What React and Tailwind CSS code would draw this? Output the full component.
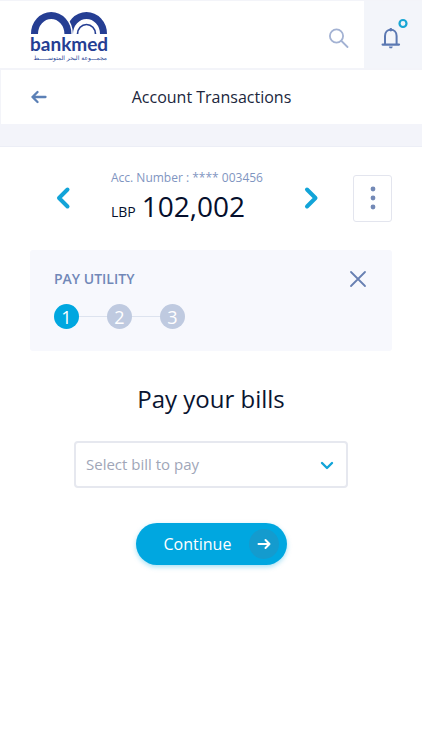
function Logo() {
  return (
    <a href="#" className="flex w-[77px] flex-col text-[#253e93]">
      <svg width="78" height="23" viewBox="0 0 78 23" fill="none" stroke="currentColor" aria-hidden="true">
        <path d="M39.500 23A17 18.500 0 0 1 73.500 23" strokeWidth="7" />
        <path d="M4.500 23A16.700 18.500 0 0 1 37.900 23" stroke="#fff" strokeWidth="10" />
        <path d="M4.500 23A16.700 18.500 0 0 1 37.900 23" strokeWidth="7" />
        <path d="M47.500 23A9 9.500 0 0 1 65.500 23" strokeWidth="1.700" />
      </svg>
      <span className="font-['Lato',sans-serif] text-[19px] leading-5 font-bold">bankmed</span>
      <span
        lang="ar"
        dir="rtl"
        className="text-right font-['DejaVu_Sans',sans-serif] text-[6px] leading-[8px] whitespace-nowrap"
      >
        مجمـــوعة البحر المتوســـــط
      </span>
    </a>
  )
}

function Chevron({ d }) {
  return (
    <svg width="16" height="24" viewBox="0 0 16 24" fill="none" stroke="currentColor" strokeWidth="4" strokeLinecap="round" strokeLinejoin="round">
      <path d={d} />
    </svg>
  )
}

function Header() {
  return (
    <header className="flex h-[70px] items-stretch border-t border-b-2 border-[#f3f4f9]">
      <div className="flex flex-1 justify-between pt-2.5 pr-[15px] pl-[30px]">
        <Logo />
        <button aria-label="Search" className="mt-[15px] h-6 text-[#a3b2d3]">
          <svg width="20" height="20" viewBox="0 0 20 20" fill="none" stroke="currentColor" strokeWidth="1.800" strokeLinecap="round">
            <circle cx="7.500" cy="8" r="6.600" />
            <path d="M12.500 13L18.500 19" />
          </svg>
        </button>
      </div>
      <button aria-label="Notifications" className="flex w-[58px] justify-center bg-[#f3f5fa] pt-4">
        <svg width="32" height="34" viewBox="0 0 32 34" fill="none" stroke="#5b78b2" strokeWidth="2">
          <path d="M8 27V19C8 15 10.500 12.800 13.800 12.800S19.600 15 19.600 19V27" />
          <path d="M5.600 27.600H22" strokeWidth="2.200" strokeLinecap="round" />
          <path d="M13.800 12.300V13" strokeWidth="2.800" strokeLinecap="round" />
          <path d="M11.800 29.600H15.800L15 31.300H12.600Z" fill="#5b78b2" stroke="none" />
          <circle cx="26" cy="6.500" r="3.500" stroke="#18a6d4" strokeWidth="2.200" />
        </svg>
      </button>
    </header>
  )
}

function TitleBar() {
  return (
    <div className="grid h-[54px] grid-cols-[60px_1fr_60px] items-center border-l border-[#f3f4f9]">
      <button aria-label="Back" className="ml-[30px] text-[#5b80b6]">
        <svg width="16" height="14" viewBox="0 0 16 14" fill="none" stroke="currentColor" strokeWidth="2.300" strokeLinecap="round" strokeLinejoin="round">
          <path d="M14.500 7H1.500M6.500 2L1.500 7L6.500 12" />
        </svg>
      </button>
      <h1 className="text-center text-base text-[#20263c]">Account Transactions</h1>
    </div>
  )
}

function AccountRow() {
  return (
    <section className="flex items-center pt-[23px]">
      <button aria-label="Previous account" className="ml-[25px] text-[#12a4d8]">
        <Chevron d="M12.500 3.500L4 12L12.500 20.500" />
      </button>
      <div className="flex flex-1 justify-center">
        <div>
          <p className="text-xs text-[#7f95c1]">Acc. Number : **** 003456</p>
          <p className="flex items-baseline gap-1.5 text-[#050f2c]">
            <span className="text-sm leading-4">LBP</span>
            <span className="text-[28px] leading-10">102,002</span>
          </p>
        </div>
      </div>
      <button aria-label="Next account" className="text-[#12a4d8]">
        <Chevron d="M4 3.500L12.500 12L4 20.500" />
      </button>
      <button
        aria-label="More options"
        className="ml-[34px] flex h-[47px] w-[39px] items-center justify-center rounded-[3px] border border-[#e3e5ee] text-[#7389b6]"
      >
        <svg width="6" height="24" viewBox="0 0 6 24" fill="currentColor">
          <circle cx="3" cy="3" r="2.400" />
          <circle cx="3" cy="12" r="2.400" />
          <circle cx="3" cy="21" r="2.400" />
        </svg>
      </button>
    </section>
  )
}

function Steps({ active }) {
  return (
    <ol className="flex items-center">
      {[1, 2, 3].map((n) => (
        <li key={n} className="flex items-center">
          {n > 1 && <span className="h-px w-7 bg-[#dde3ef]" />}
          <span
            className={
              n === active
                ? 'flex size-[25px] items-center justify-center rounded-full bg-[#00a7e0] text-lg text-white'
                : 'flex size-[25px] items-center justify-center rounded-full bg-[#bfcae0] text-lg text-white'
            }
          >
            {n}
          </span>
        </li>
      ))}
    </ol>
  )
}

function UtilityCard() {
  return (
    <section className="mt-6 h-[101px] rounded-[3px] bg-[#f7f8fd] pt-[19px] pr-[25px] pl-6">
      <div className="mb-[15px] flex items-center justify-between">
        <h2 className="text-sm font-semibold text-[#7188b8]">PAY UTILITY</h2>
        <button aria-label="Close" className="text-[#6880b2]">
          <svg width="18" height="18" viewBox="0 0 18 18" fill="none" stroke="currentColor" strokeWidth="1.800" strokeLinecap="round">
            <path d="M2 2L16 16M16 2L2 16" />
          </svg>
        </button>
      </div>
      <Steps active={1} />
    </section>
  )
}

function BillForm() {
  return (
    <form className="flex flex-col items-center px-11" onSubmit={(e) => e.preventDefault()}>
      <label htmlFor="bill" className="mt-8 text-2xl text-[#0a1430]">Pay your bills</label>
      <div className="relative mt-[26px] w-full">
        <select
          id="bill"
          className="h-[47px] w-full appearance-none rounded-[4px] border-2 border-[#e6e8ef] bg-white pl-2.5 text-[15px] text-[#a0a6b8]"
        >
          <option>Select bill to pay</option>
        </select>
        <svg className="pointer-events-none absolute top-5 right-3.5" width="14" height="9" viewBox="0 0 14 9" fill="none" stroke="#12a4d8" strokeWidth="2.400" strokeLinecap="round" strokeLinejoin="round">
          <path d="M2 2L7 7L12 2" />
        </svg>
      </div>
      <button className="mt-[35px] flex h-[42px] w-[151px] items-center justify-between rounded-full bg-[#00a7e0] pr-2 pl-7 text-base text-white shadow-[0_2px_5px_rgba(0,167,224,0.35)]">
        Continue
        <span className="flex size-[30px] items-center justify-center rounded-full bg-[#149bce]">
          <svg width="14" height="12" viewBox="0 0 14 12" fill="none" stroke="currentColor" strokeWidth="2" strokeLinecap="round" strokeLinejoin="round">
            <path d="M1.500 6H12.500M8.500 2L12.500 6L8.500 10" />
          </svg>
        </span>
      </button>
    </form>
  )
}

export default function App() {
  return (
    <div className="min-h-screen bg-white font-['Open_Sans',sans-serif]">
      <Header />
      <TitleBar />
      <div className="h-[23px] border-b border-[#eceef6] bg-[#f3f4fa]" />
      <main className="px-[30px]">
        <AccountRow />
        <UtilityCard />
        <BillForm />
      </main>
    </div>
  )
}
